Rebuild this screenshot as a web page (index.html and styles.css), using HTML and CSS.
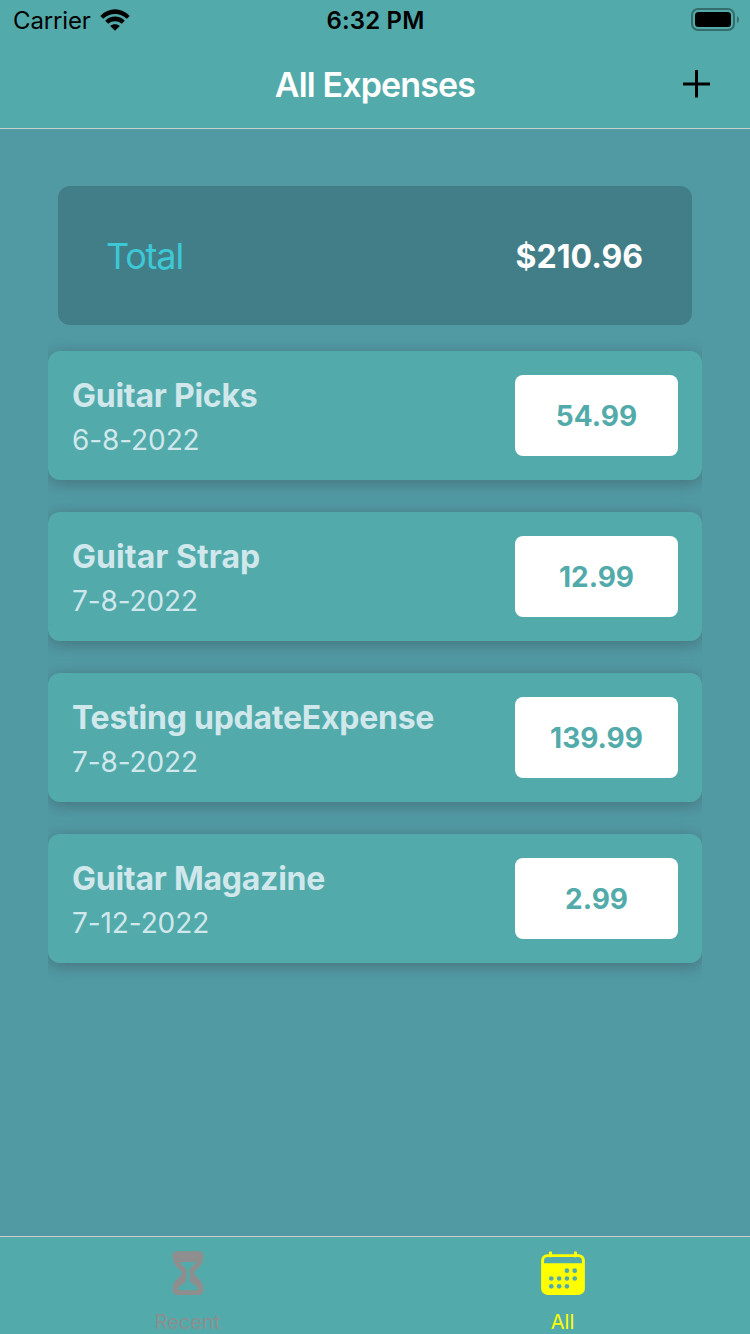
FILE: index.html
```
<!DOCTYPE html>
<html lang="en">
<head>
<meta charset="utf-8">
<title>All Expenses</title>
<link rel="stylesheet" href="styles.css">
</head>
<body>
<div class="app">
  <header class="header">
    <div class="status">
      <div class="status-left">
        <span class="carrier">Carrier</span>
        <svg class="wifi" width="30" height="22" viewBox="0 0 30 22">
          <path d="M0.300 6.900C8.500-2 21.500-2 29.700 6.900L26.800 9.800C20.200 3.500 9.800 3.500 3.200 9.800Z"/>
          <path d="M5.200 11.800C10.700 6.200 19.300 6.200 24.800 11.800L21.800 14.800C18 11.500 12 11.500 8.200 14.800Z"/>
          <path d="M10.200 17C12.800 14.600 17.200 14.600 19.800 17L15 21.800Z"/>
        </svg>
      </div>
      <span class="clock">6:32 PM</span>
      <div class="status-right">
        <svg class="battery" width="50" height="23" viewBox="0 0 50 23">
          <rect x="1" y="1" width="42" height="21" rx="6" fill="none" stroke="#346d6c" stroke-width="2"/>
          <rect x="4" y="4" width="36" height="15" rx="3.500"/>
          <path d="M46 8Q48 9 48 11.500T46 15Z" fill="#346d6c"/>
        </svg>
      </div>
    </div>
    <div class="navbar">
      <h1 class="title">All Expenses</h1>
      <svg class="add" width="28" height="28" viewBox="0 0 28 28"><path d="M13.500 0V27.500M0 14H27" stroke="#000" stroke-width="3"/></svg>
    </div>
  </header>

  <main class="content">
    <section class="summary">
      <span class="summary-label">Total</span>
      <span class="summary-value">$210.96</span>
    </section>
    <ul class="expenses">
      <li class="expense">
        <div><div class="name">Guitar Picks</div><div class="date">6-8-2022</div></div>
        <div class="amount">54.99</div>
      </li>
      <li class="expense">
        <div><div class="name name-loose">Guitar Strap</div><div class="date">7-8-2022</div></div>
        <div class="amount">12.99</div>
      </li>
      <li class="expense">
        <div><div class="name">Testing updateExpense</div><div class="date">7-8-2022</div></div>
        <div class="amount">139.99</div>
      </li>
      <li class="expense">
        <div><div class="name">Guitar Magazine</div><div class="date">7-12-2022</div></div>
        <div class="amount">2.99</div>
      </li>
    </ul>
  </main>

  <nav class="tabs">
    <div class="tab">
      <svg width="50" height="50" viewBox="0 0 512 512" fill="currentColor" fill-rule="evenodd">
        <path d="M415.700 427.130c-8.740-76.890-43.830-108.760-69.460-132C328.520 279 320 270.610 320 256c0-14.410 8.490-22.640 26.160-38.440 25.930-23.170 61.440-54.910 69.560-132.840a47 47 0 0 0-12-36.260A50.300 50.300 0 0 0 366.390 32H145.610a50.340 50.340 0 0 0-37.390 16.460A47.050 47.050 0 0 0 96.280 84.720c8.090 77.680 43.470 109.190 69.300 132.190C183.420 232.800 192 241.090 192 256c0 15.100-8.600 23.560-26.500 39.750C140 318.850 105 350.480 96.300 427.130A46.590 46.590 0 0 0 108 463.330 50.440 50.440 0 0 0 145.610 480h220.780A50.440 50.440 0 0 0 404 463.330a46.590 46.590 0 0 0 11.700-36.200zM343.300 432H169.130c-15.600 0-20-18-9.060-29.160C186.550 376 240 356.780 240 326V224c0-19.850-38-35-61.510-67.200-3.880-5.310-3.490-12.800 6.370-12.800h142.730c8.410 0 10.220 7.430 6.400 12.750C310.820 189 272 204.050 272 224v102c0 30.530 55.710 47 80.400 76.870 9.950 12.040 6.470 29.130-9.100 29.130z"/>
      </svg>
      <span class="tab-label">Recent</span>
    </div>
    <div class="tab tab-active">
      <svg width="50" height="50" viewBox="0 0 512 512" fill="currentColor">
        <path fill-rule="evenodd" d="M96 64H416A64 64 0 0 1 480 128V416A64 64 0 0 1 416 480H96A64 64 0 0 1 32 416V128A64 64 0 0 1 96 64ZM100 92A38 38 0 0 0 62 130V156H450V130A38 38 0 0 0 412 92Z"/>
        <path d="M128 48V80M384 48V80" stroke="currentColor" stroke-width="32" stroke-linecap="round"/>
        <g class="dots">
          <circle cx="296" cy="232" r="24"/><circle cx="376" cy="232" r="24"/>
          <circle cx="136" cy="312" r="24"/><circle cx="216" cy="312" r="24"/><circle cx="296" cy="312" r="24"/><circle cx="376" cy="312" r="24"/>
          <circle cx="136" cy="392" r="24"/><circle cx="216" cy="392" r="24"/><circle cx="296" cy="392" r="24"/>
        </g>
      </svg>
      <span class="tab-label">All</span>
    </div>
  </nav>
</div>
</body>
</html>
```
FILE: styles.css
```
* { box-sizing: border-box; margin: 0; padding: 0; }
body { font-family: Inter, "Liberation Sans", sans-serif; }
svg { display: block; flex: none; }
.app { display: flex; flex-direction: column; width: 750px; height: 1334px; overflow: hidden; background: #519aa4; white-space: nowrap; }
.header { height: 129px; background: #52abaa; border-bottom: 1px solid #c9d0d0; }
.status { display: grid; grid-template-columns: 1fr auto 1fr; align-items: center; height: 41px; padding: 0 9px 0 13px; font-size: 24px; line-height: 42px; }
.status-left { display: flex; align-items: center; gap: 9px; letter-spacing: -0.15px; }
.status-right { display: flex; justify-content: flex-end; }
.wifi { margin-bottom: 2px; }
.battery { margin-bottom: 3px; }
.clock { margin-right: 3px; font-weight: 600; letter-spacing: 0.15px; }
.navbar { display: grid; grid-template-columns: 1fr auto 1fr; align-items: center; height: 85px; padding: 0 39px; }
.title { grid-column: 2; padding-top: 2px; font-size: 34px; font-weight: 600; line-height: 40px; color: #fff; letter-spacing: -0.85px; }
.add { justify-self: end; }
.content { flex: 1; padding: 57px 48px 0; }
.summary { display: flex; align-items: center; justify-content: space-between; height: 139px; margin: 0 10px; padding: 1px 49px 0 48px; border-radius: 12px; background: #427e87; }
.summary-label { font-size: 36px; font-weight: 400; color: #3dc8d6; letter-spacing: -1.2px; }
.summary-value { font-size: 32px; font-weight: 700; color: #fff; }
.expenses { display: flex; flex-direction: column; gap: 32px; padding: 26px 0; list-style: none; overflow: hidden; }
.expense { display: flex; justify-content: space-between; height: 129px; padding: 24px; border-radius: 12px; background: #52abaa; box-shadow: 0 3px 16px rgba(58, 58, 66, 0.42); color: #d0e7ec; }
.name { margin-bottom: 7px; padding-top: 1px; font-size: 32px; font-weight: 700; line-height: 39px; letter-spacing: -0.25px; }
.name-loose { letter-spacing: 0.05px; }
.date { padding-top: 1px; font-size: 28px; line-height: 34px; letter-spacing: -0.1px; }
.amount { width: 163px; height: 81px; border-radius: 8px; background: #fff; color: #52abaa; font-size: 28px; font-weight: 700; line-height: 82px; text-align: center; }
.tabs { display: flex; height: 98px; border-top: 1px solid #d3cdd2; background: #52abaa; }
.tab { display: flex; flex: 1; flex-direction: column; align-items: center; padding-top: 11px; color: #8e8e8f; }
.tab-active { color: #ff0; }
.tab-label { margin: 12px 0 0; font-size: 20px; line-height: 24px; }
.dots { fill: #52abaa; }
```
